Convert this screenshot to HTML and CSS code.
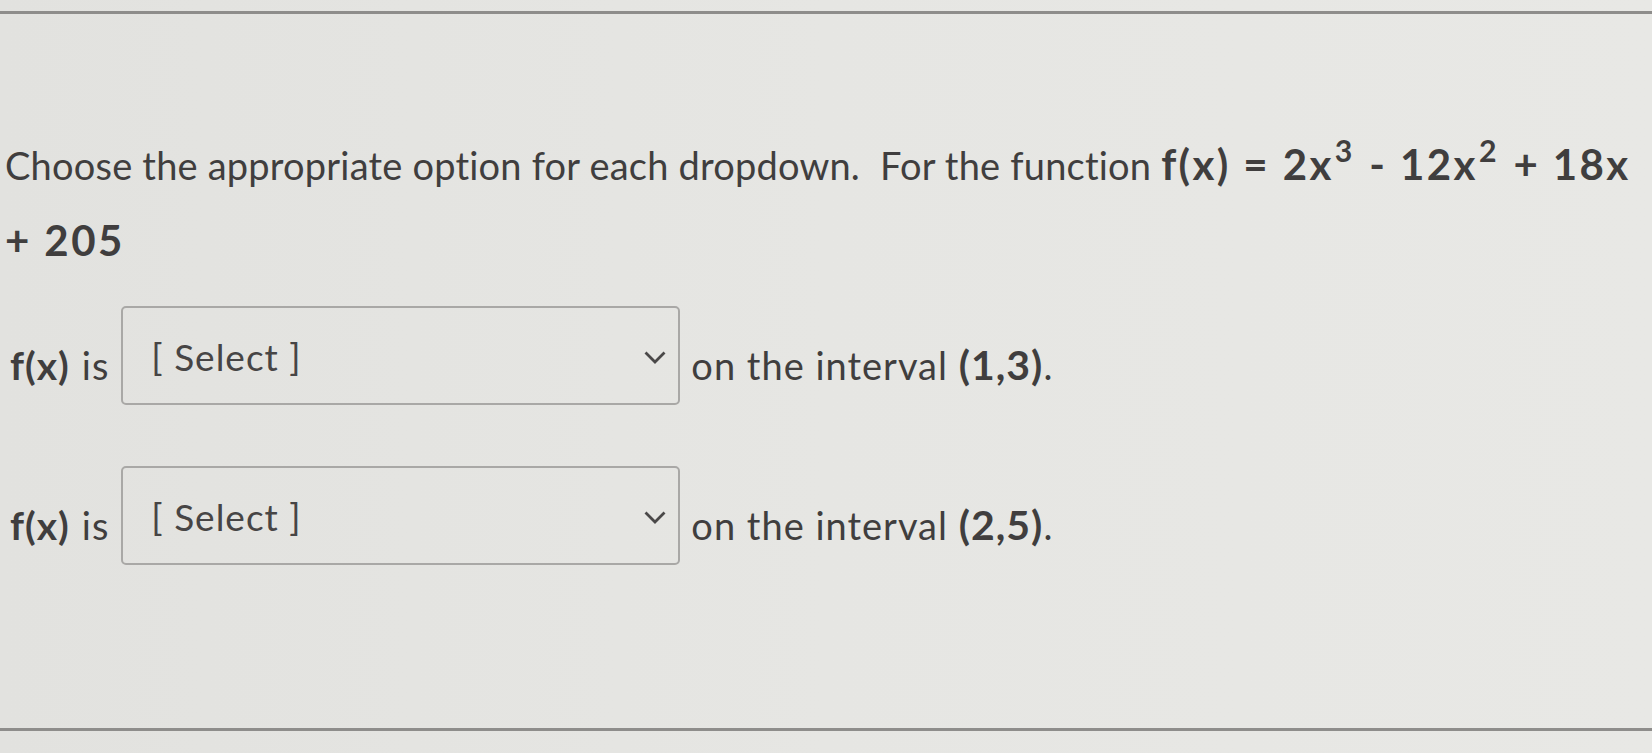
FILE: index.html
```html
<!DOCTYPE html>
<html>
<head>
<meta charset="utf-8">
<link rel="stylesheet" href="styles.css">
</head>
<body>
<div class="page">
  <div class="rule rule-top"></div>
  <div class="content">
    <p class="question">Choose the appropriate option for each dropdown.&nbsp; For the function <strong class="math">f(x) = 2x<sup>3</sup> - 12x<sup>2</sup> + 18x + 205</strong></p>
    <div class="rows">
      <div class="row">
        <strong class="fx">f(x)</strong><span class="is">is</span>
        <div class="select">
          <span class="select-text">[ Select ]</span>
          <svg class="chev" width="24" height="16" viewBox="0 0 24 16"><path d="M2.5 2.5 L12 12 L21.5 2.5" fill="none" stroke="#4a4848" stroke-width="2.8"/></svg>
        </div>
        <span class="after">on the interval <strong class="interval">(1,3)</strong>.</span>
      </div>
      <div class="row">
        <strong class="fx">f(x)</strong><span class="is">is</span>
        <div class="select">
          <span class="select-text">[ Select ]</span>
          <svg class="chev" width="24" height="16" viewBox="0 0 24 16"><path d="M2.5 2.5 L12 12 L21.5 2.5" fill="none" stroke="#4a4848" stroke-width="2.8"/></svg>
        </div>
        <span class="after">on the interval <strong class="interval">(2,5)</strong>.</span>
      </div>
    </div>
  </div>
  <div class="rule rule-bottom"></div>
</div>
</body>
</html>
```
FILE: styles.css
```css
html, body {
  margin: 0;
  padding: 0;
}
body {
  background: #e4e4e1;
  font-family: Lato, "Open Sans", sans-serif;
  color: #403e3e;
}
.page {
  width: 1652px;
  height: 753px;
  overflow: hidden;
  display: flex;
  flex-direction: column;
  background: linear-gradient(90deg, #e2e2df 0%, #e6e6e3 50%, #e8e8e5 100%);
}
.rule {
  height: 3px;
  background: #8e8d8b;
  flex: none;
}
.rule-top {
  margin-top: 11px;
}
.content {
  flex: 1;
  padding: 0 0 0 5px;
}
.question {
  margin: 113px 0 0 0;
  font-size: 38px;
  letter-spacing: 0.2px;
  line-height: 75px;
  max-width: 1640px;
}
.math {
  font-weight: 700;
  font-size: 42px;
  letter-spacing: 2.4px;
}
.math sup {
  font-size: 0.72em;
  line-height: 0;
  vertical-align: 0.6em;
  margin-left: 1px;
  margin-right: 2px;
}
.rows {
  margin-top: 27px;
  display: flex;
  flex-direction: column;
  gap: 61px;
  padding-left: 5px;
}
.row {
  display: flex;
  align-items: center;
  font-size: 38px;
  letter-spacing: 1px;
}
.fx, .is, .after {
  margin-top: 18px;
}
.fx {
  font-weight: 700;
  font-size: 39px;
}
.is {
  margin-left: 12px;
  margin-right: 12px;
}
.select {
  width: 559px;
  height: 99px;
  box-sizing: border-box;
  border: 2px solid #a9a8a6;
  border-radius: 5px;
  display: flex;
  align-items: center;
  justify-content: space-between;
  padding: 0 11px 0 28px;
  margin-right: 11px;
}
.select-text {
  font-size: 37px;
  color: #474545;
  margin-top: 2px;
}
.chev {
  margin-top: 4px;
}
.interval {
  font-weight: 700;
  font-size: 41px;
}
.rule-bottom {
  margin-bottom: 22px;
}
```
